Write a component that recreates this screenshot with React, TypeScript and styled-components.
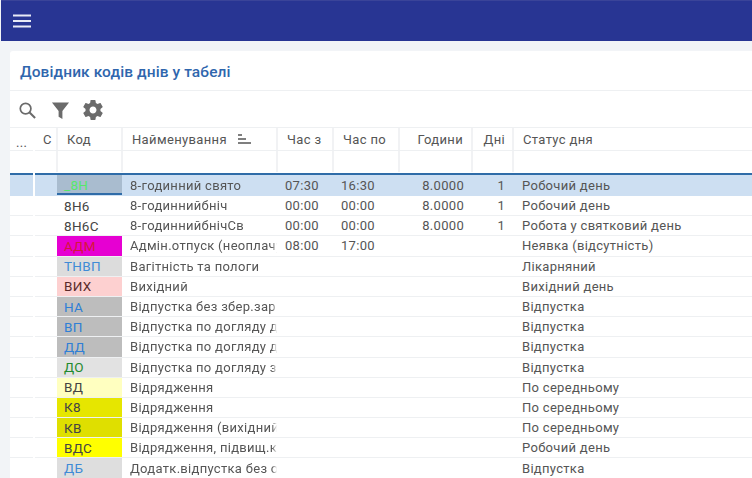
import React from "react";
import styled, { createGlobalStyle } from "styled-components";

const Global = createGlobalStyle`
  html, body { margin: 0; padding: 0; background: #f2f4f7; overflow: hidden; }
  body { width: 752px; height: 478px; font-family: Roboto, "Liberation Sans", sans-serif; }
`;

const COLS = "23px 2px 22px 65px 155px 56px 66px 73px 41px 1fr";

const Page = styled.div`
  width: 752px;
  height: 478px;
  overflow: hidden;
  display: flex;
  flex-direction: column;
  padding-left: 1px;
  box-sizing: border-box;
`;
const TopBar = styled.header`
  height: 41px;
  flex: none;
  background: #283593;
  display: flex;
  align-items: center;
  padding: 0 0 1px 12px;
  border-top: 1px solid #3a4499;
  box-sizing: border-box;
`;
const Card = styled.main`
  flex: 1;
  margin: 10px 0 0 9px;
  background: #fff;
  border-radius: 3px 0 0 0;
  min-height: 0;
  overflow: hidden;
`;
const TitleBar = styled.div`
  height: 40px;
  box-sizing: border-box;
  border-bottom: 1px solid #eef0f2;
  display: flex;
  align-items: center;
  padding: 2px 0 0 10px;
`;
const Title = styled.h1`
  margin: 0;
  font-size: 15.5px;
  font-weight: 500;
  color: #2f66ad;
  letter-spacing: 0.1px;
`;
const Tools = styled.div`
  height: 36px;
  display: flex;
  align-items: center;
  gap: 9px;
  padding: 2px 0 0 5px;
  box-sizing: border-box;
`;
const ToolBtn = styled.span`
  display: flex;
  width: 24px;
  height: 24px;
  align-items: center;
  justify-content: center;
`;
const Row = styled.div<{ $h: number; $bg?: string; $line?: string }>`
  display: grid;
  grid-template-columns: ${COLS};
  height: ${(p) => p.$h}px;
  box-sizing: border-box;
  background: ${(p) => p.$bg || "transparent"};
  border-bottom: 1px solid ${(p) => p.$line || "#eef0f2"};
`;
const HeadRow = styled(Row)`
  border-top: 1px solid #eef0f2;
`;
const Gap = styled.div`
  background: #fff;
  margin-bottom: -1px;
`;
const HeadCell = styled.div<{ $right?: boolean; $pad?: number; $divider?: boolean; $low?: boolean }>`
  display: flex;
  align-items: ${(p) => (p.$low ? "flex-end" : "center")};
  justify-content: ${(p) => (p.$right ? "flex-end" : "flex-start")};
  gap: 11px;
  padding: ${(p) => (p.$right ? `0 ${p.$pad ?? 9}px 0 0` : `0 0 0 ${p.$pad ?? 10}px`)};
  font-size: 13px;
  color: #555;
  letter-spacing: 0.35px;
  white-space: nowrap;
  box-shadow: ${(p) => (p.$divider === false ? "none" : "inset -1px 0 0 #f1f2f4, 1px 0 0 #f1f2f4")};
  min-width: 0;
`;
const FilterRule = styled.div`
  height: 2px;
  display: grid;
  grid-template-columns: ${COLS};
  background: #2f6ca8;
`;
const Cell = styled.div<{ $right?: boolean; $pad?: number }>`
  display: flex;
  align-items: center;
  justify-content: ${(p) => (p.$right ? "flex-end" : "flex-start")};
  padding: ${(p) => (p.$right ? `0 ${p.$pad ?? 8}px 0 0` : `0 0 0 ${p.$pad ?? 8}px`)};
  font-size: 13px;
  color: #555;
  letter-spacing: 0.3px;
  white-space: nowrap;
  overflow: hidden;
  min-width: 0;
`;
const Fade = styled.span`
  display: block;
  width: 100%;
  overflow: hidden;
  -webkit-mask-image: linear-gradient(to right, #000 calc(100% - 5px), transparent);
  mask-image: linear-gradient(to right, #000 calc(100% - 5px), transparent);
`;
const CodeCell = styled.div<{ $bg?: string; $color?: string; $mark?: boolean }>`
  display: flex;
  align-items: center;
  padding-left: 7px;
  font-size: 13.5px;
  letter-spacing: 0.3px;
  white-space: nowrap;
  background: ${(p) => p.$bg || "transparent"};
  color: ${(p) => p.$color || "#444"};
  box-shadow: ${(p) => (p.$mark ? "inset 0 -2px 0 #2f6ca8" : "none")};
`;
const Rows = styled.div`
  display: flex;
  flex-direction: column;
`;

type D = { c: string; bg?: string; fg?: string; n: string; a?: string; b?: string; h?: string; d?: string; s: string };
const data: D[] = [
  { c: "_8Н", bg: "#a9bccf", fg: "#57e86b", n: "8-годинний свято", a: "07:30", b: "16:30", h: "8.0000", d: "1", s: "Робочий день" },
  { c: "8Н6", n: "8-годиннийбніч", a: "00:00", b: "00:00", h: "8.0000", d: "1", s: "Робочий день" },
  { c: "8Н6С", n: "8-годиннийбнічСв", a: "00:00", b: "00:00", h: "8.0000", d: "1", s: "Робота у святковий день" },
  { c: "АДМ", bg: "#e600d2", fg: "#d4183c", n: "Адмін.отпуск (неоплачуваний)", a: "08:00", b: "17:00", s: "Неявка (відсутність)" },
  { c: "ТНВП", bg: "#dcdcdc", fg: "#3f8bd6", n: "Вагітність та пологи", s: "Лікарняний" },
  { c: "ВИХ", bg: "#fdd0d0", fg: "#5a2a2a", n: "Вихідний", s: "Вихідний день" },
  { c: "НА", bg: "#bdbdbd", fg: "#2f7fd6", n: "Відпустка без збер.зарплати", s: "Відпустка" },
  { c: "ВП", bg: "#bdbdbd", fg: "#2f7fd6", n: "Відпустка по догляду дитини", s: "Відпустка" },
  { c: "ДД", bg: "#bdbdbd", fg: "#2f7fd6", n: "Відпустка по догляду дитини", s: "Відпустка" },
  { c: "ДО", bg: "#e2e2e2", fg: "#1f8a2e", n: "Відпустка по догляду за дитиною", s: "Відпустка" },
  { c: "ВД", bg: "#ffffc0", fg: "#444", n: "Відрядження", s: "По середньому" },
  { c: "К8", bg: "#e6e600", fg: "#444", n: "Відрядження", s: "По середньому" },
  { c: "КВ", bg: "#dfdf00", fg: "#444", n: "Відрядження (вихідний день)", s: "По середньому" },
  { c: "ВДС", bg: "#ffff00", fg: "#444", n: "Відрядження, підвищ.кваліфікації", s: "Робочий день" },
  { c: "ДБ", bg: "#dedede", fg: "#3f8bd6", n: "Додатк.відпустка без оплати", s: "Відпустка" },
];

export default function App() {
  return (
    <Page>
      <Global />
      <TopBar>
        <svg width="18" height="14" viewBox="0 0 18 14" aria-label="menu">
          <path d="M0 1.5h18M0 7h18M0 12.5h18" stroke="#e8eaf6" strokeWidth="2" />
        </svg>
      </TopBar>
      <Card>
        <TitleBar>
          <Title>Довідник кодів днів у табелі</Title>
        </TitleBar>
        <Tools>
          <ToolBtn>
            <svg width="19" height="19" viewBox="0 0 20 20" fill="none" stroke="#6b6b6b">
              <circle cx="8" cy="8" r="5.6" strokeWidth="1.8" />
              <path d="M12.2 12.2 18 18" strokeWidth="2.2" />
            </svg>
          </ToolBtn>
          <ToolBtn>
            <svg width="19" height="19" viewBox="0 0 20 20" fill="#6b6b6b">
              <path d="M1 1.5h18L12 10.5V19l-4-2.5v-6z" />
            </svg>
          </ToolBtn>
          <ToolBtn>
            <svg width="24" height="24" viewBox="0 0 24 24" fill="#6b6b6b">
              <path d="M19.43 12.98c.04-.32.07-.64.07-.98s-.03-.66-.07-.98l2.11-1.65c.19-.15.24-.42.12-.64l-2-3.46c-.12-.22-.39-.3-.61-.22l-2.49 1c-.52-.4-1.08-.73-1.69-.98l-.38-2.65A.488.488 0 0 0 14 2h-4c-.25 0-.46.18-.49.42l-.38 2.65c-.61.25-1.17.59-1.69.98l-2.49-1c-.23-.09-.49 0-.61.22l-2 3.46c-.13.22-.07.49.12.64l2.11 1.65c-.04.32-.07.65-.07.98s.03.66.07.98l-2.11 1.65c-.19.15-.24.42-.12.64l2 3.46c.12.22.39.3.61.22l2.49-1c.52.4 1.08.73 1.69.98l.38 2.65c.03.24.24.42.49.42h4c.25 0 .46-.18.49-.42l.38-2.65c.61-.25 1.17-.59 1.69-.98l2.49 1c.23.09.49 0 .61-.22l2-3.46c.12-.22.07-.49-.12-.64l-2.11-1.65zM12 15.5c-1.93 0-3.5-1.57-3.5-3.5s1.57-3.5 3.5-3.5 3.5 1.57 3.5 3.5-1.57 3.5-3.5 3.5z" />
            </svg>
          </ToolBtn>
        </Tools>
        <HeadRow $h={24}>
          <HeadCell $low $pad={6} $divider={false}>...</HeadCell>
          <Gap />
          <HeadCell $pad={8}>С</HeadCell>
          <HeadCell>Код</HeadCell>
          <HeadCell>
            Найменування
            <svg width="14" height="10" viewBox="0 0 14 10" stroke="#555" strokeWidth="1.4">
              <path d="M0 1h4M0 5h8M0 9h13" />
            </svg>
          </HeadCell>
          <HeadCell>Час з</HeadCell>
          <HeadCell>Час по</HeadCell>
          <HeadCell $right>Години</HeadCell>
          <HeadCell $right $pad={8}>Дні</HeadCell>
          <HeadCell $divider={false}>Статус дня</HeadCell>
        </HeadRow>
        <Row $h={22} $line="transparent">
          <HeadCell $divider={false} />
          <Gap />
          <HeadCell />
          <HeadCell />
          <HeadCell />
          <HeadCell />
          <HeadCell />
          <HeadCell />
          <HeadCell />
          <HeadCell $divider={false} />
        </Row>
        <FilterRule>
          <div />
          <Gap />
        </FilterRule>
        <Rows>
          {data.map((r, i) => (
            <Row key={r.c} $h={i === 0 ? 21 : 20.2} $bg={i === 0 ? "#cddff2" : undefined} $line={i === 0 ? "#cddff2" : undefined}>
              <div />
              <Gap />
              <div />
              <CodeCell $bg={r.bg} $color={r.fg} $mark={i === 0}>{r.c}</CodeCell>
              <Cell><Fade>{r.n}</Fade></Cell>
              <Cell>{r.a}</Cell>
              <Cell>{r.b}</Cell>
              <Cell $right>{r.h}</Cell>
              <Cell $right>{r.d}</Cell>
              <Cell $pad={9}>{r.s}</Cell>
            </Row>
          ))}
        </Rows>
      </Card>
    </Page>
  );
}
